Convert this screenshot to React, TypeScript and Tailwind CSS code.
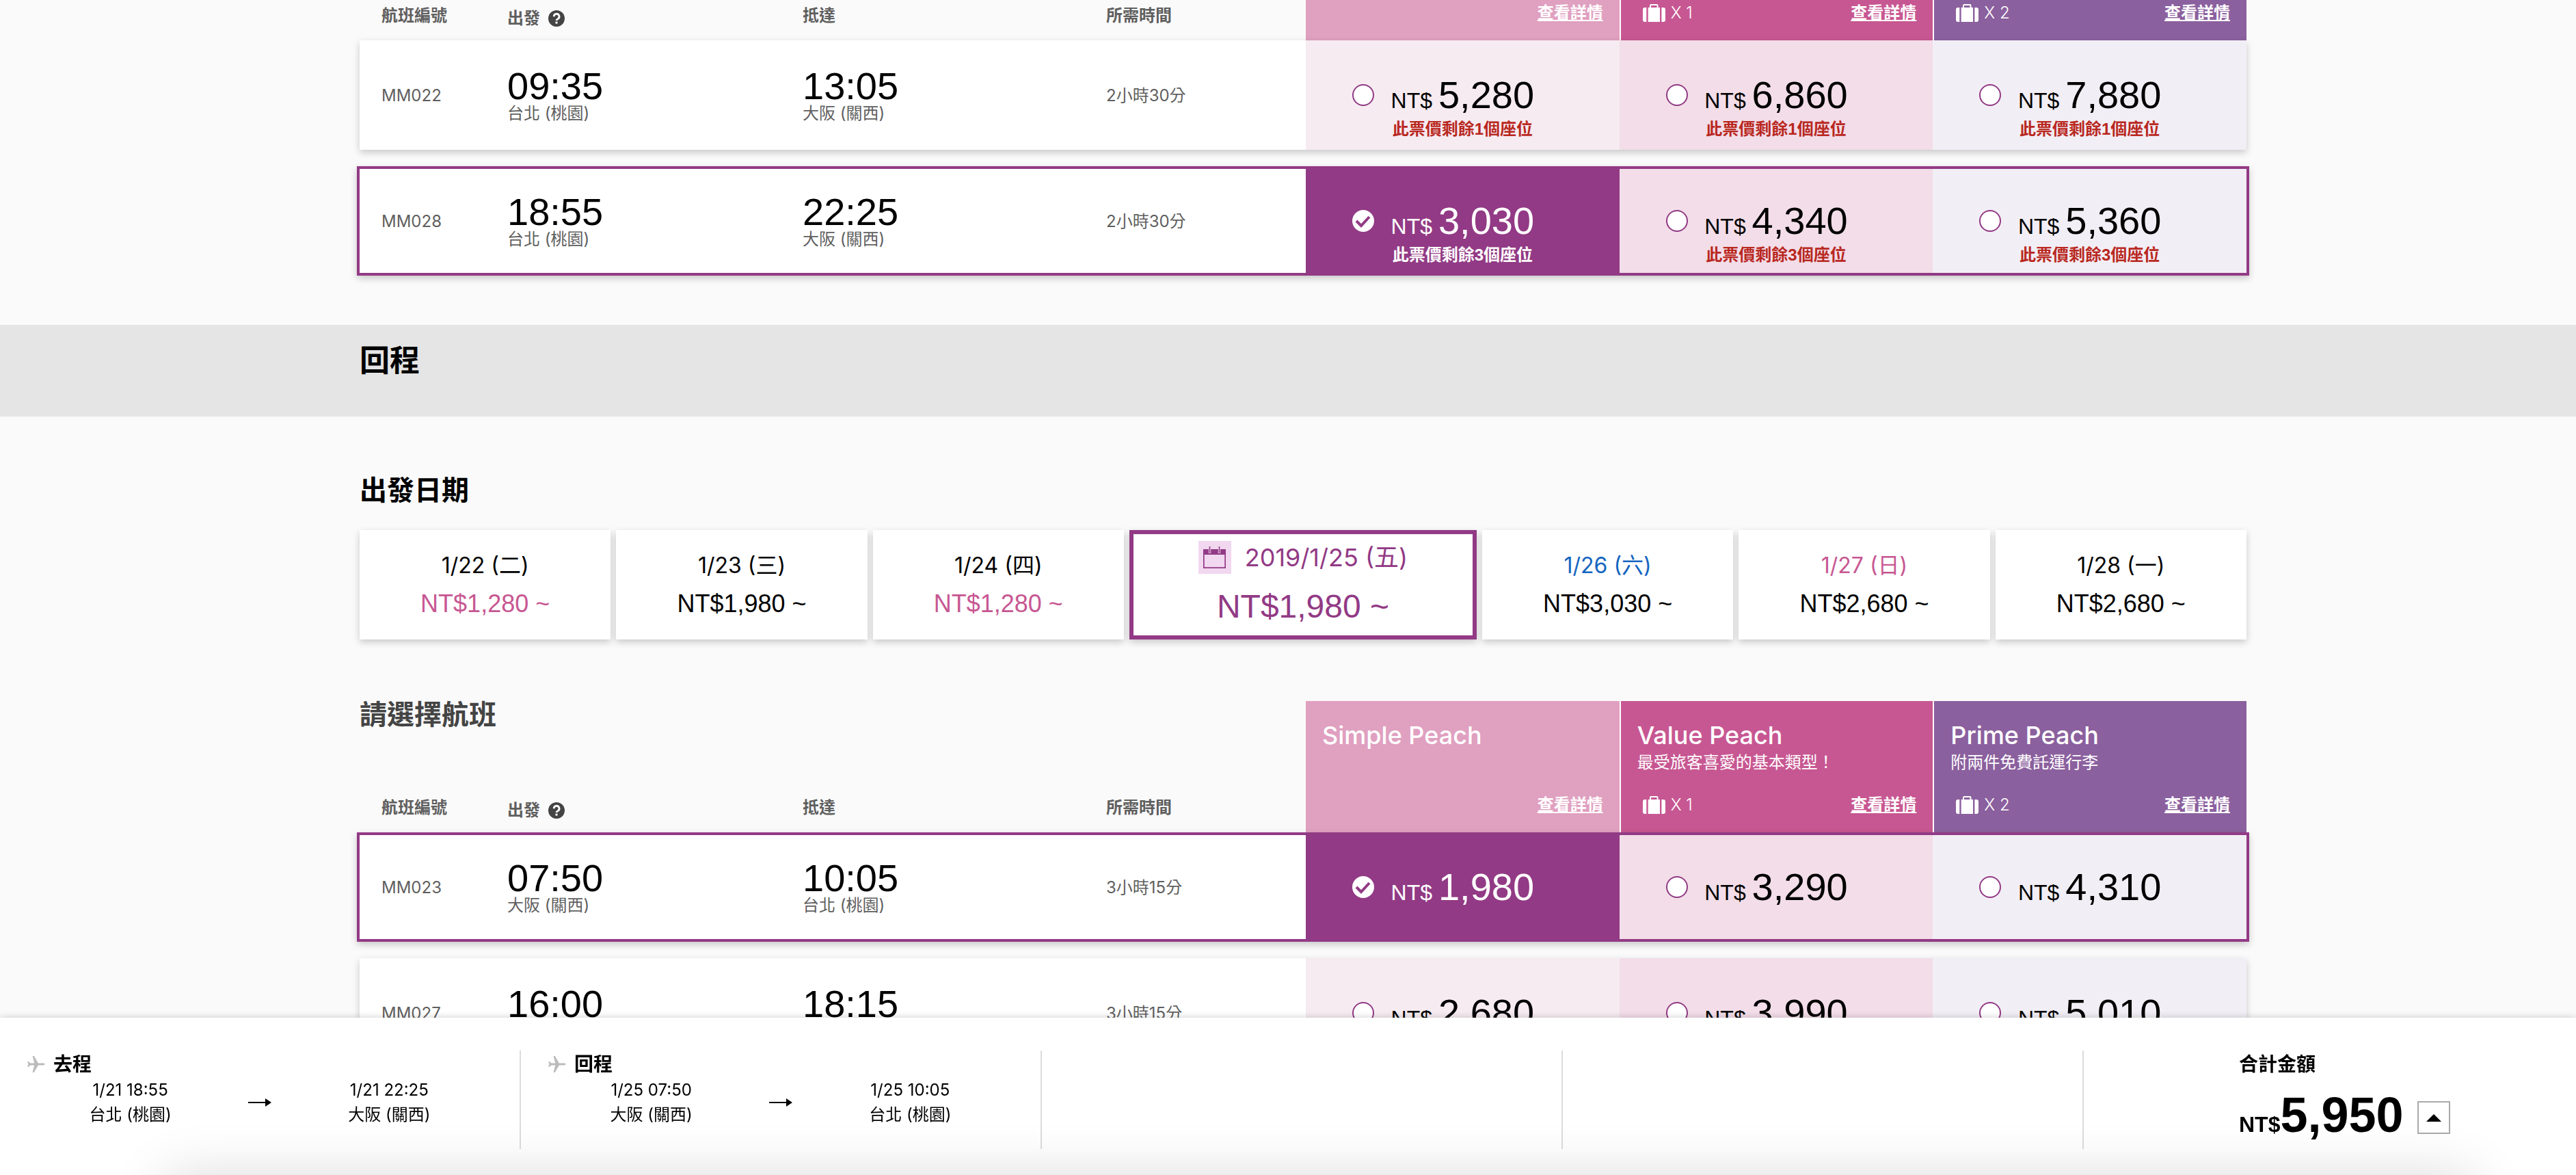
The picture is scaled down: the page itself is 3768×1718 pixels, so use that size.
import type { ReactNode } from 'react';

interface Fare {
  price: string;
  seats?: number;
}

interface Flight {
  id: string;
  departTime: string;
  departCity: string;
  arriveTime: string;
  arriveCity: string;
  duration: string;
  selected?: boolean;
  fares: Fare[];
}

const TAIPEI = '台北 (桃園)';
const OSAKA = '大阪 (關西)';

const PLANS = [
  { name: 'Simple Peach', note: '', bags: 0, head: 'bg-[#e0a0c0]', cell: 'bg-[#f6ebf1]' },
  { name: 'Value Peach', note: '最受旅客喜愛的基本類型！', bags: 1, head: 'bg-[#c75792]', cell: 'bg-[#f2dde8]' },
  { name: 'Prime Peach', note: '附兩件免費託運行李', bags: 2, head: 'bg-[#8b609e]', cell: 'bg-[#f2eef5]' },
];

const OUTBOUND: Flight[] = [
  {
    id: 'MM022', departTime: '09:35', departCity: TAIPEI, arriveTime: '13:05', arriveCity: OSAKA, duration: '2小時30分',
    fares: [{ price: '5,280', seats: 1 }, { price: '6,860', seats: 1 }, { price: '7,880', seats: 1 }],
  },
  {
    id: 'MM028', departTime: '18:55', departCity: TAIPEI, arriveTime: '22:25', arriveCity: OSAKA, duration: '2小時30分', selected: true,
    fares: [{ price: '3,030', seats: 3 }, { price: '4,340', seats: 3 }, { price: '5,360', seats: 3 }],
  },
];

const INBOUND: Flight[] = [
  {
    id: 'MM023', departTime: '07:50', departCity: OSAKA, arriveTime: '10:05', arriveCity: TAIPEI, duration: '3小時15分', selected: true,
    fares: [{ price: '1,980' }, { price: '3,290' }, { price: '4,310' }],
  },
  {
    id: 'MM027', departTime: '16:00', departCity: OSAKA, arriveTime: '18:15', arriveCity: TAIPEI, duration: '3小時15分',
    fares: [{ price: '2,680' }, { price: '3,990' }, { price: '5,010' }],
  },
];

const DATES = [
  { label: '1/22 (二)', price: 'NT$1,280 ~', labelColor: 'text-black', priceColor: 'text-[#c75792]' },
  { label: '1/23 (三)', price: 'NT$1,980 ~', labelColor: 'text-black', priceColor: 'text-black' },
  { label: '1/24 (四)', price: 'NT$1,280 ~', labelColor: 'text-black', priceColor: 'text-[#c75792]' },
  { label: '2019/1/25 (五)', price: 'NT$1,980 ~', selected: true },
  { label: '1/26 (六)', price: 'NT$3,030 ~', labelColor: 'text-[#1565c0]', priceColor: 'text-black' },
  { label: '1/27 (日)', price: 'NT$2,680 ~', labelColor: 'text-[#c75792]', priceColor: 'text-black' },
  { label: '1/28 (一)', price: 'NT$2,680 ~', labelColor: 'text-black', priceColor: 'text-black' },
];

const LEGS = [
  { title: '去程', from: '1/21 18:55', fromCity: TAIPEI, to: '1/21 22:25', toCity: OSAKA },
  { title: '回程', from: '1/25 07:50', fromCity: OSAKA, to: '1/25 10:05', toCity: TAIPEI },
];

const ROW_GRID = 'grid grid-cols-[162fr_324fr_333fr_219fr_344fr_344fr_344fr]';
const CARD_SHADOW = 'shadow-[0_4px_10px_rgba(0,0,0,0.2)]';
const NUM_FONT = "font-['Liberation_Sans','Noto_Sans_CJK_TC',sans-serif]";

function HelpIcon() {
  return (
    <svg viewBox="0 0 24 24" className="size-6" aria-hidden="true">
      <circle cx="12" cy="12" r="12" fill="#444" />
      <path d="M8.2 9.2a3.9 3.9 0 1 1 5.8 3.4c-1.3.8-2 1.2-2 2.4" fill="none" stroke="#fff" strokeWidth="2.8" />
      <rect x="10.5" y="16.6" width="3" height="3" fill="#fff" />
    </svg>
  );
}

function SuitcaseIcon() {
  return (
    <svg viewBox="0 0 33 26" className="h-[26px] w-[33px]" fill="#fff" aria-hidden="true">
      <path d="M10 5V2a2 2 0 0 1 2-2h8.500a2 2 0 0 1 2 2v3h-2V2h-8.500v3z" />
      <path d="M7.700 5H25v21H7.700z" />
      <path d="M5.300 5v21H3a3 3 0 0 1-3-3V8a3 3 0 0 1 3-3zM27.400 5v21H30a3 3 0 0 0 3-3V8a3 3 0 0 0-3-3z" />
    </svg>
  );
}

function CalendarIcon() {
  return (
    <span className="flex size-12 items-center justify-center bg-[#f1d7f0]">
      <svg viewBox="0 0 33 32" className="h-8 w-[33px]" aria-hidden="true">
        <path d="M0 4h33v28H0zM1.700 12v18.300h29.600V12z" fill="#923a85" fillRule="evenodd" />
        <path d="M9.500 0v10M23.500 0v10" stroke="#f1d7f0" strokeWidth="3.400" />
        <path d="M9.500 0v9.500M23.500 0v9.500" stroke="#923a85" strokeWidth="1.600" />
      </svg>
    </span>
  );
}

function PlaneIcon() {
  return (
    <svg viewBox="0 0 26 24" className="h-6 w-[26px]" fill="#bbb" aria-hidden="true">
      <path d="M25.500 12c0-.8-1-1.400-2.300-1.400h-7.400L9.800 0H7.600l2.600 10.600H4.400L2 8.200H0L1.500 12 0 15.800h2l2.400-2.400h5.800L7.600 24h2.200l6-10.600h7.400c1.300 0 2.300-.6 2.300-1.400z" />
    </svg>
  );
}

function ArrowIcon() {
  return (
    <svg viewBox="0 0 34 12" className="h-3 w-[34px]" aria-hidden="true">
      <path d="M0 5h25V0l9 6-9 6V7H0z" />
    </svg>
  );
}

function HeadCell({ children, className = 'pb-5' }: { children: ReactNode; className?: string }) {
  return (
    <th scope="col" className={`flex items-end text-left leading-8 font-bold text-[#5f5f5f] ${className}`}>
      {children}
    </th>
  );
}

function FareCell({ fare, group, label, color, checked }: {
  fare: Fare; group: string; label: string; color: string; checked: boolean;
}) {
  return (
    <td className={checked ? 'bg-[#923a85] text-white' : `text-black ${color}`}>
      <label className="flex h-full items-center pr-[100px] pl-[68px]">
        <span className="grid size-8 shrink-0 place-items-center">
          <input
            type="radio"
            name={group}
            aria-label={label}
            defaultChecked={checked}
            className="col-start-1 row-start-1 size-8 appearance-none rounded-full border-2 border-[#923a85] bg-white checked:border-white"
          />
          {checked && (
            <svg viewBox="0 0 32 32" className="pointer-events-none col-start-1 row-start-1 size-8" aria-hidden="true">
              <path d="M6 16l7 7 12-13" fill="none" stroke="#923a85" strokeWidth="4" />
            </svg>
          )}
        </span>
        <span className={`flex-1 pt-12 text-center whitespace-nowrap ${NUM_FONT}`}>
          <span className="block text-[56px] leading-12">
            <span className="text-[32px] leading-none">NT$ </span>
            {fare.price}
          </span>
          <span className={`block h-12 leading-13 font-bold ${checked ? 'text-white' : 'text-[#b9281f]'}`}>
            {fare.seats && `此票價剩餘${fare.seats}個座位`}
          </span>
        </span>
      </label>
    </td>
  );
}

function PlaceCell({ time, city }: { time: string; city: string }) {
  return (
    <td className="flex flex-col justify-center pt-1.5">
      <span className={`text-[56px] leading-12 text-black ${NUM_FONT}`}>{time}</span>
      <span className="leading-8">{city}</span>
    </td>
  );
}

function FlightTable({ name, flights, compact = false }: { name: string; flights: Flight[]; compact?: boolean }) {
  return (
    <table className="block">
      <thead className="block">
        <tr className={`${ROW_GRID} ${compact ? 'h-[59px]' : 'h-48'}`}>
          <HeadCell className="pb-5 pl-8">航班編號</HeadCell>
          <HeadCell className="pb-4">
            <span className="flex items-center gap-3">出發 <HelpIcon /></span>
          </HeadCell>
          <HeadCell>抵達</HeadCell>
          <HeadCell>所需時間</HeadCell>
          {PLANS.map((plan, i) => (
            <th
              key={plan.name}
              scope="col"
              className={`flex flex-col px-6 pb-6 text-left font-normal text-white ${plan.head} ${i > 0 ? 'border-l-2 border-white' : ''}`}
            >
              {!compact && (
                <>
                  <span className="pt-6.5 text-[36px] leading-12 font-medium">{plan.name}</span>
                  <span className="leading-8">{plan.note}</span>
                </>
              )}
              <span className="mt-auto flex items-center justify-between leading-8">
                {plan.bags > 0 ? (
                  <span className="flex items-center gap-2 pl-2 font-light"><SuitcaseIcon /> X {plan.bags}</span>
                ) : <span />}
                <a href="#detail" className="font-bold underline">查看詳情</a>
              </span>
            </th>
          ))}
        </tr>
      </thead>
      <tbody className="flex flex-col gap-6">
        {flights.map((flight) => (
          <tr
            key={flight.id}
            className={`min-h-40 bg-white text-[#5f5f5f] ${ROW_GRID} ${CARD_SHADOW} ${flight.selected ? '-mx-1 border-4 border-[#923a85]' : ''}`}
          >
            <td className="flex items-center pt-0.5 pl-8">{flight.id}</td>
            <PlaceCell time={flight.departTime} city={flight.departCity} />
            <PlaceCell time={flight.arriveTime} city={flight.arriveCity} />
            <td className="flex items-center pt-0.5">{flight.duration}</td>
            {flight.fares.map((fare, i) => (
              <FareCell
                key={PLANS[i].name}
                fare={fare}
                group={name}
                label={`${flight.id} ${PLANS[i].name}`}
                color={PLANS[i].cell}
                checked={Boolean(flight.selected) && i === 0}
              />
            ))}
          </tr>
        ))}
      </tbody>
    </table>
  );
}

function DatePicker() {
  return (
    <div className="grid grid-cols-[1fr_1fr_1fr_508px_1fr_1fr_1fr] gap-2">
      {DATES.map((date) => date.selected ? (
        <button
          key={date.label}
          type="button"
          className={`flex h-40 flex-col items-center border-6 border-[#923a85] bg-white pt-2.5 text-[#923a85] ${CARD_SHADOW}`}
        >
          <span className="flex items-center gap-5 text-[36px] leading-12"><CalendarIcon />{date.label}</span>
          <span className={`pt-5 text-[48px] leading-14 ${NUM_FONT}`}>{date.price}</span>
        </button>
      ) : (
        <button key={date.label} type="button" className={`flex h-40 flex-col items-center bg-white pt-7 ${CARD_SHADOW}`}>
          <span className={`text-[32px] leading-12 ${date.labelColor}`}>{date.label}</span>
          <span className={`pt-2 text-[36px] leading-12 ${date.priceColor} ${NUM_FONT}`}>{date.price}</span>
        </button>
      ))}
    </div>
  );
}

function Stop({ time, city }: { time: string; city: string }) {
  return (
    <div className="flex-1 text-center leading-9">
      <div>{time}</div>
      <div>{city}</div>
    </div>
  );
}

function SummaryBar() {
  return (
    <footer className="fixed inset-x-0 bottom-0 h-[230px] overflow-hidden bg-white pt-12 text-black shadow-[0_0_10px_rgba(0,0,0,0.2)]">
      <div className="grid grid-cols-[762fr_762fr_762fr_762fr_720fr]">
        {LEGS.map((leg) => (
          <section key={leg.title} className="h-36 border-r-2 border-[#dcdcdc]">
            <h3 className="flex items-center gap-3 pl-10 text-[28px] leading-10 font-bold"><PlaneIcon />{leg.title}</h3>
            <div className="flex items-center px-24">
              <Stop time={leg.from} city={leg.fromCity} />
              <div className="flex flex-1 justify-center"><ArrowIcon /></div>
              <Stop time={leg.to} city={leg.toCity} />
            </div>
          </section>
        ))}
        <div className="h-36 border-r-2 border-[#dcdcdc]" />
        <div className="h-36 border-r-2 border-[#dcdcdc]" />
        <section className="pl-[227px]">
          <h3 className="text-[28px] leading-10 font-bold">合計金額</h3>
          <div className="flex items-center gap-5 pt-3.5">
            <p className={`text-[72px] leading-20 font-bold ${NUM_FONT}`}>
              <span className="text-[32px] leading-none">NT$</span>
              5,950
            </p>
            <button type="button" aria-label="明細" className="mt-2 flex size-12 items-center justify-center border-2 border-[#aaa]">
              <svg viewBox="0 0 22 11" className="h-[11px] w-[22px]" aria-hidden="true"><path d="M11 0l11 11H0z" /></svg>
            </button>
          </div>
        </section>
      </div>
      {/* soft shade rising from the bottom edge */}
      <div className="pointer-events-none absolute top-full right-[150px] left-[240px] h-20 shadow-[0_0_80px_rgba(0,0,0,0.14)]" />
    </footer>
  );
}

export default function App() {
  return (
    <div className="h-screen overflow-hidden bg-[#fafafa] font-['Inter','Noto_Sans_CJK_TC',sans-serif] text-[24px]">
      <div className="mx-auto max-w-[2804px] pl-11">
        <FlightTable name="outbound" flights={OUTBOUND} compact />
      </div>

      <div className="mt-18 h-[134px] bg-[#e5e5e5]">
        <h1 className="mx-auto max-w-[2804px] pt-6 pl-11 text-[44px] leading-14 font-bold text-black">回程</h1>
      </div>

      <div className="mx-auto max-w-[2804px] pl-11">
        <h2 className="mt-22 mb-[38px] text-[40px] leading-10 font-bold text-black">出發日期</h2>
        <DatePicker />
        <h2 className="mt-[90px] -mb-10 text-[40px] leading-10 font-bold text-[#444]">請選擇航班</h2>
        <FlightTable name="inbound" flights={INBOUND} />
      </div>

      <SummaryBar />
    </div>
  );
}
